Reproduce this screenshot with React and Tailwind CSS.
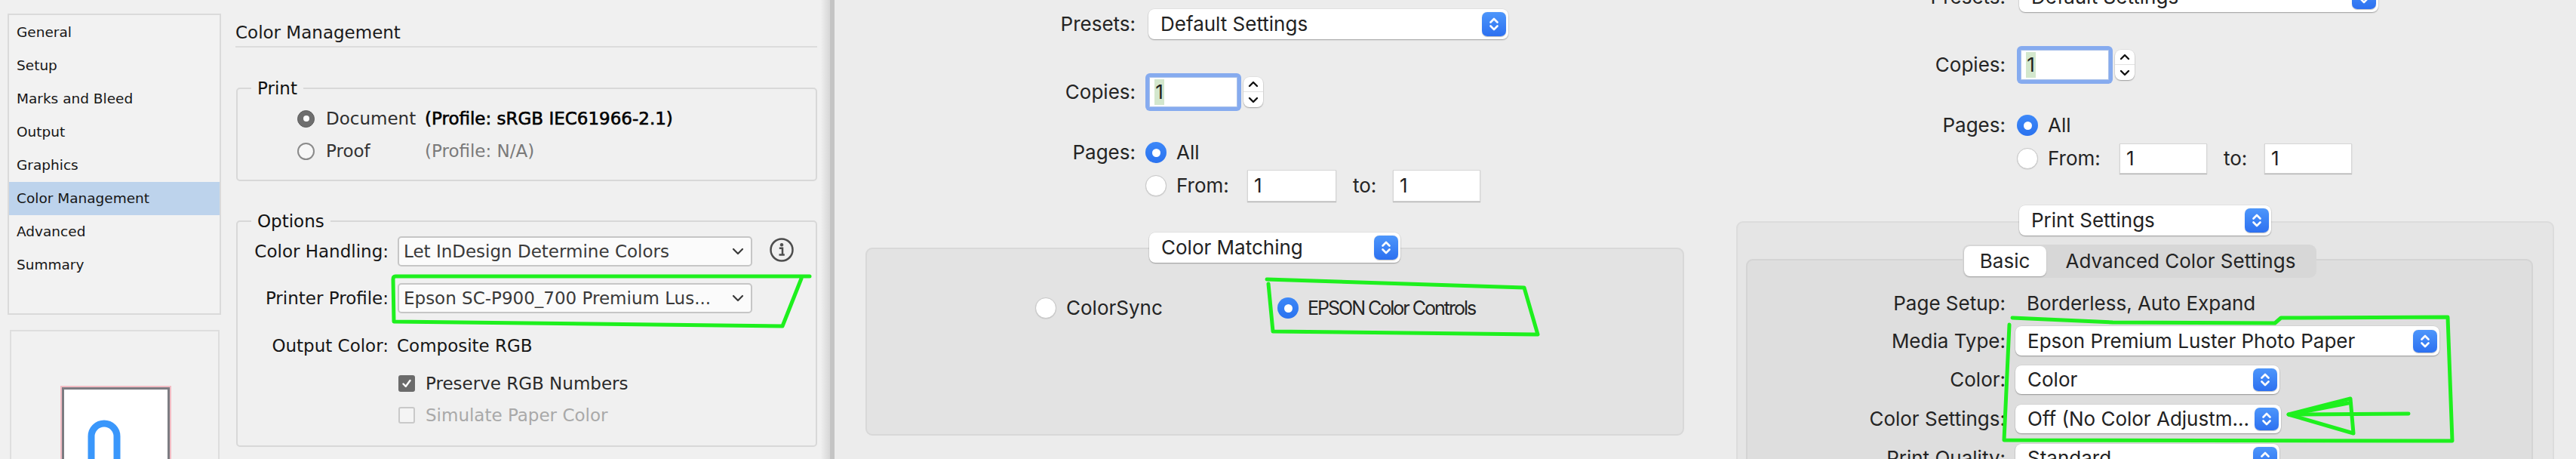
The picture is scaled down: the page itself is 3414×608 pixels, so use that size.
import React from "react";

function Chevrons({ color = "white", w = 16, h = 22, sw = 2.6 }) {
  return (
    <svg width={w} height={h} viewBox="0 0 16 22">
      <path d="M3.5 8.5 L8 4 L12.5 8.5 M3.5 13.5 L8 18 L12.5 13.5" stroke={color} strokeWidth={sw} fill="none" strokeLinecap="round" strokeLinejoin="round" />
    </svg>
  );
}

function BlueStepper({ className = "" }) {
  return (
    <div className={"w-[32px] shrink-0 rounded-[7px] bg-linear-to-b from-[#4d96fb] to-[#2d70f0] flex items-center justify-center shadow-[0_0.5px_1px_rgba(0,0,0,0.25)] " + className}>
      <Chevrons />
    </div>
  );
}

function Popup({ className = "", text, stepH = "h-[32px]" }) {
  return (
    <div className={"flex items-center shrink-0 bg-white rounded-[8px] shadow-[0_1px_1.5px_rgba(0,0,0,0.3),0_0_0_0.5px_rgba(0,0,0,0.08)] pl-[16px] " + className}>
      <span className="leading-none text-[#222] whitespace-nowrap">{text}</span>
      <BlueStepper className={"ml-auto mr-[3px] " + stepH} />
    </div>
  );
}

function SmallStepper({ className = "" }) {
  return (
    <div className={"w-[26px] h-[40px] shrink-0 rounded-[8px] bg-white shadow-[0_1px_1.5px_rgba(0,0,0,0.3),0_0_0_0.5px_rgba(0,0,0,0.08)] flex flex-col items-center " + className}>
      <div className="h-[20px] w-full flex items-center justify-center border-b border-[#e2e2e2]">
        <svg width="14" height="9" viewBox="0 0 14 9"><path d="M2 7 L7 2 L12 7" stroke="#111" strokeWidth="2.4" fill="none" strokeLinecap="round" strokeLinejoin="round" /></svg>
      </div>
      <div className="h-[20px] w-full flex items-center justify-center">
        <svg width="14" height="9" viewBox="0 0 14 9"><path d="M2 2 L7 7 L12 2" stroke="#111" strokeWidth="2.4" fill="none" strokeLinecap="round" strokeLinejoin="round" /></svg>
      </div>
    </div>
  );
}

function CopiesField({ className = "" }) {
  return (
    <div className={"flex items-center shrink-0 " + className}>
      <div className="w-[127px] h-[50px] rounded-[6px] bg-[#86abef] p-[5px]">
        <div className="w-full h-full bg-white border border-[#a9c0ea] flex items-center pl-[6px]">
          <span className="bg-[#d3e7cd] h-[34px] w-[13px] flex items-center justify-center leading-none text-[#1f1f1f]">1</span>
        </div>
      </div>
      <SmallStepper className="ml-[3px]" />
    </div>
  );
}

function BlueRadio({ className = "" }) {
  return (
    <div className={"w-[28px] h-[28px] rounded-full bg-linear-to-b from-[#3d88f8] to-[#2a72ef] flex items-center justify-center shrink-0 " + className}>
      <div className="w-[11px] h-[11px] rounded-full bg-white" />
    </div>
  );
}

function WhiteRadio({ className = "" }) {
  return <div className={"w-[28px] h-[28px] rounded-full bg-white border border-[#c8c8c8] shadow-[0_0.5px_1px_rgba(0,0,0,0.15)] shrink-0 " + className} />;
}

function Field({ className = "" }) {
  return (
    <div className={"shrink-0 bg-white border border-[#d6d6d6] shadow-[0_1px_1px_rgba(0,0,0,0.22)] flex items-center pl-[8px] leading-none text-[#1f1f1f] " + className}>1</div>
  );
}

function InDesignPanel() {
  const items = ["General", "Setup", "Marks and Bleed", "Output", "Graphics", "Color Management", "Advanced", "Summary"];
  return (
    <div className="w-[1088px] h-full shrink-0 bg-[#f0f0f0] flex pl-[10px] pt-[18px] font-['DejaVu_Sans','Liberation_Sans',sans-serif] text-[#161616] overflow-hidden">
      <div className="w-[283px] shrink-0 flex flex-col">
        <div className="h-[399px] shrink-0 border-2 border-[#dadada] bg-[#f2f2f2] pt-[1px]">
          {items.map((it) => (
            <div key={it} className={"h-[44px] flex items-center pl-[10px] text-[18.5px] leading-none " + (it === "Color Management" ? "bg-[#bdd3ec]" : "")}>
              {it}
            </div>
          ))}
        </div>
        <div className="mt-[20px] ml-[3px] w-[278px] h-[200px] shrink-0 border-2 border-[#dedede] bg-[#f1f1f1] pt-[72px] pl-[65px]">
          <div className="w-[147px] h-[130px] border-2 border-[#f2bcc4]">
            <div className="w-full h-full border-[3px] border-[#7c7c82] bg-white pl-[31px] pt-[40px]">
              <svg width="44" height="80" viewBox="0 0 44 80">
                <path d="M5 80 V22 A17 17 0 0 1 39 22 V80" stroke="#3a97fb" strokeWidth="9" fill="none" />
              </svg>
            </div>
          </div>
        </div>
      </div>
      <div className="ml-[19px] w-[771px] shrink-0 flex flex-col text-[23px]">
        <div className="mt-[11px] h-[28px] shrink-0 leading-[28px] text-[23px] text-[#1a1a1a]">Color Management</div>
        <div className="mt-[4px] h-[2px] shrink-0 bg-[#dcdcdc]" />
        <div className="relative mt-[53px] ml-[1px] w-[770px] h-[124px] shrink-0 border-2 border-[#d8d8d8] rounded-[5px]">
          <span className="absolute left-[18px] top-[-15px] px-[8px] bg-[#f0f0f0] leading-[28px] text-[#111]">Print</span>
          <div className="pt-[24px] pl-[79px] flex flex-col gap-[13px]">
            <div className="h-[30px] flex items-center">
              <div className="w-[23px] h-[23px] rounded-full bg-[#6e6e6e] border border-[#5c5c5c] flex items-center justify-center">
                <div className="w-[8px] h-[8px] rounded-full bg-white" />
              </div>
              <span className="ml-[15px] w-[131px] leading-none text-[#2e2e2e]">Document</span>
              <span className="leading-none text-black [-webkit-text-stroke:0.6px_#000]">(Profile: sRGB IEC61966-2.1)</span>
            </div>
            <div className="h-[30px] flex items-center">
              <div className="w-[23px] h-[23px] rounded-full bg-[#f7f7f7] border-2 border-[#8a8a8a]" />
              <span className="ml-[15px] w-[131px] leading-none text-[#333]">Proof</span>
              <span className="leading-none text-[#7a7a7a]">(Profile: N/A)</span>
            </div>
          </div>
        </div>
        <div className="relative mt-[52px] ml-[1px] w-[770px] h-[300px] shrink-0 border-2 border-[#d8d8d8] rounded-[5px]">
          <span className="absolute left-[18px] top-[-15px] px-[8px] bg-[#f0f0f0] leading-[28px] text-[#111]">Options</span>
          <div className="pt-[19px] flex flex-col">
            <div className="h-[40px] flex items-center">
              <div className="w-[200px] text-right leading-none text-[#161616]">Color Handling:</div>
              <div className="ml-[12px] w-[470px] h-[40px] border-2 border-[#c6c6c6] rounded-[5px] bg-[#fbfbfb] pl-[6px] flex items-center">
                <span className="leading-none text-[#3a3a3a] whitespace-nowrap">Let InDesign Determine Colors</span>
                <svg className="ml-auto mr-[9px]" width="16" height="10" viewBox="0 0 16 10"><path d="M2 2 L8 8 L14 2" stroke="#3a3a3a" strokeWidth="2.2" fill="none" strokeLinecap="round" strokeLinejoin="round" /></svg>
              </div>
              <svg className="ml-[23px] -mt-[4px]" width="32" height="32" viewBox="0 0 32 32">
                <circle cx="16" cy="16" r="14.5" stroke="#4d4d4d" strokeWidth="2.5" fill="none" />
                <circle cx="16" cy="9.3" r="2.2" fill="#4d4d4d" />
                <path d="M12.8 13.8 H17 V22.3 M12.5 22.6 H19.8" stroke="#4d4d4d" strokeWidth="2.5" fill="none" />
              </svg>
            </div>
            <div className="mt-[22px] h-[40px] flex items-center">
              <div className="w-[200px] text-right leading-none text-[#161616]">Printer Profile:</div>
              <div className="ml-[12px] w-[470px] h-[40px] border-2 border-[#c6c6c6] rounded-[5px] bg-[#fbfbfb] pl-[6px] flex items-center">
                <span className="leading-none text-[#3a3a3a] whitespace-nowrap">Epson SC-P900_700 Premium Lus...</span>
                <svg className="ml-auto mr-[9px]" width="16" height="10" viewBox="0 0 16 10"><path d="M2 2 L8 8 L14 2" stroke="#3a3a3a" strokeWidth="2.2" fill="none" strokeLinecap="round" strokeLinejoin="round" /></svg>
              </div>
            </div>
            <div className="mt-[23px] h-[40px] flex items-center">
              <div className="w-[200px] text-right leading-none text-[#161616]">Output Color:</div>
              <span className="ml-[11px] leading-none text-[#161616]">Composite RGB</span>
            </div>
            <div className="mt-[15px] h-[30px] flex items-center">
              <div className="ml-[213px] w-[22px] h-[22px] rounded-[3px] bg-[#6b6b6b] flex items-center justify-center">
                <svg width="16" height="16" viewBox="0 0 16 16"><path d="M3.5 8.5 L6.8 11.8 L12.5 4" stroke="white" strokeWidth="2.4" fill="none" strokeLinecap="round" strokeLinejoin="round" /></svg>
              </div>
              <span className="ml-[14px] leading-none text-[#2a2a2a]">Preserve RGB Numbers</span>
            </div>
            <div className="mt-[12px] h-[30px] flex items-center">
              <div className="ml-[213px] w-[22px] h-[22px] rounded-[3px] bg-[#f4f4f4] border-2 border-[#c9c9c9]" />
              <span className="ml-[14px] leading-none text-[#a9a9a9]">Simulate Paper Color</span>
            </div>
          </div>
        </div>
      </div>
    </div>
  );
}

function PrintPanelA() {
  return (
    <div className="w-[1159px] h-full shrink-0 bg-[#ececec] flex flex-col font-['Inter','Liberation_Sans',sans-serif] text-[26px] text-[#242424] overflow-hidden">
      <div className="mt-[12px] flex items-center h-[40px] shrink-0">
        <div className="w-[399px] shrink-0 text-right leading-none">Presets:</div>
        <Popup className="ml-[17px] w-[477px] h-[40px]" text="Default Settings" />
      </div>
      <div className="mt-[45px] flex items-center h-[50px] shrink-0">
        <div className="w-[399px] shrink-0 text-right leading-none">Copies:</div>
        <CopiesField className="ml-[13px]" />
      </div>
      <div className="mt-[40px] flex items-center h-[30px] shrink-0">
        <div className="w-[399px] shrink-0 text-right leading-none">Pages:</div>
        <BlueRadio className="ml-[13px]" />
        <span className="ml-[13px] leading-none">All</span>
      </div>
      <div className="mt-[8px] flex items-center h-[42px] shrink-0">
        <div className="w-[399px] shrink-0" />
        <WhiteRadio className="ml-[13px]" />
        <span className="ml-[13px] w-[94px] shrink-0 leading-none">From:</span>
        <Field className="w-[118px] h-[42px]" />
        <span className="ml-[22px] w-[53px] shrink-0 leading-none">to:</span>
        <Field className="w-[116px] h-[42px]" />
      </div>
      <div className="mt-[41px] ml-[41px] w-[1085px] flex flex-col items-center shrink-0">
        <Popup className="relative z-10 w-[333px] h-[40px]" text="Color Matching" />
        <div className="-mt-[20px] w-full h-[249px] shrink-0 border-2 border-[#d8d8d8] bg-[#e3e3e3] rounded-[9px] pt-[63px] pl-[223px]">
          <div className="h-[30px] flex items-center">
            <div className="w-[321px] shrink-0 flex items-center">
              <WhiteRadio />
              <span className="ml-[13px] leading-none">ColorSync</span>
            </div>
            <BlueRadio />
            <span className="ml-[12px] leading-none whitespace-nowrap text-[25px] tracking-[-2px]">EPSON Color Controls</span>
          </div>
        </div>
      </div>
    </div>
  );
}

function PrintPanelB() {
  return (
    <div className="w-[1149px] h-full shrink-0 bg-[#ececec] flex flex-col font-['Inter','Liberation_Sans',sans-serif] text-[26px] text-[#242424] overflow-hidden">
      <div className="-mt-[24px] flex items-center h-[40px] shrink-0">
        <div className="w-[393px] shrink-0 text-right leading-none">Presets:</div>
        <Popup className="ml-[18px] w-[476px] h-[40px]" text="Default Settings" />
      </div>
      <div className="mt-[45px] flex items-center h-[50px] shrink-0">
        <div className="w-[393px] shrink-0 text-right leading-none">Copies:</div>
        <CopiesField className="ml-[15px]" />
      </div>
      <div className="mt-[40px] flex items-center h-[30px] shrink-0">
        <div className="w-[393px] shrink-0 text-right leading-none">Pages:</div>
        <BlueRadio className="ml-[15px]" />
        <span className="ml-[13px] leading-none">All</span>
      </div>
      <div className="mt-[9px] flex items-center h-[40px] shrink-0">
        <div className="w-[393px] shrink-0" />
        <WhiteRadio className="ml-[15px]" />
        <span className="ml-[13px] w-[95px] shrink-0 leading-none">From:</span>
        <Field className="w-[116px] h-[40px]" />
        <span className="ml-[22px] w-[54px] shrink-0 leading-none">to:</span>
        <Field className="w-[116px] h-[40px]" />
      </div>
      <div className="mt-[42px] ml-[36px] w-[1084px] flex flex-col items-center shrink-0">
        <Popup className="relative z-10 w-[334px] h-[40px]" text="Print Settings" />
        <div className="-mt-[19px] w-full h-[400px] shrink-0 border-2 border-[#dcdcdc] bg-[#e5e5e5] rounded-[9px] pt-[29px] pl-[11px] flex flex-col">
          <div className="relative z-10 w-[1043px] h-[44px] shrink-0 flex justify-center">
            <div className="h-[44px] rounded-[9px] bg-[#d7d7d7] p-[2px] flex items-center">
              <div className="w-[109px] h-[40px] rounded-[8px] bg-white shadow-[0_1px_1.5px_rgba(0,0,0,0.25)] flex items-center justify-center leading-none">Basic</div>
              <span className="px-[26px] leading-none whitespace-nowrap">Advanced Color Settings</span>
            </div>
          </div>
          <div className="-mt-[25px] w-[1043px] h-[400px] shrink-0 border-2 border-[#d4d4d4] bg-[#dedede] rounded-[9px] pt-[42px] flex flex-col">
            <div className="h-[30px] flex items-center shrink-0">
              <div className="w-[342px] shrink-0 text-right leading-none">Page Setup:</div>
              <span className="ml-[28px] leading-none">Borderless, Auto Expand</span>
            </div>
            <div className="mt-[15px] h-[39px] flex items-center shrink-0">
              <div className="w-[342px] shrink-0 text-right leading-none">Media Type:</div>
              <Popup className="ml-[13px] w-[562px] h-[39px]" stepH="h-[30px]" text="Epson Premium Luster Photo Paper" />
            </div>
            <div className="mt-[13px] h-[38px] flex items-center shrink-0">
              <div className="w-[342px] shrink-0 text-right leading-none">Color:</div>
              <Popup className="ml-[13px] w-[350px] h-[38px]" stepH="h-[30px]" text="Color" />
            </div>
            <div className="mt-[14px] h-[38px] flex items-center shrink-0">
              <div className="w-[342px] shrink-0 text-right leading-none">Color Settings:</div>
              <Popup className="ml-[13px] w-[352px] h-[38px]" stepH="h-[30px]" text="Off (No Color Adjustm..." />
            </div>
            <div className="mt-[14px] h-[38px] flex items-center shrink-0">
              <div className="w-[342px] shrink-0 text-right leading-none">Print Quality:</div>
              <Popup className="ml-[13px] w-[350px] h-[38px]" stepH="h-[30px]" text="Standard" />
            </div>
          </div>
        </div>
      </div>
    </div>
  );
}

function Annotations() {
  const g = "#1ef01e";
  return (
    <svg className="absolute left-0 top-0 pointer-events-none" width="3414" height="608" viewBox="0 0 3414 608">
      <g stroke={g} strokeWidth="5" fill="none" strokeLinejoin="round" strokeLinecap="round">
        <path d="M1073 366 L524 366 Q521 366 521 370 L522 426 L1037 432 L1062 369" />
        <path d="M1679 370 L2020 381 L2038 443 L1687 439 L1681 376" />
        <path d="M2667 421 L2800 427 L3015 428 L3023 421 L3244 420 L3250 584 L2656 583 L2663 430" />
        <path d="M3192 548 L3033 549" />
        <path d="M3033 549 L3115 528 L3119 574 Z" />
        <path d="M3040 548 L3112 534" />
      </g>
    </svg>
  );
}

export default function App() {
  return (
    <div className="relative w-[3414px] h-[608px] overflow-hidden flex bg-[#ececec]">
      <InDesignPanel />
      <div className="w-[12px] h-full shrink-0 bg-linear-to-r from-[#efefef] to-[#d6d6d6]" />
      <div className="w-[6px] h-full shrink-0 bg-[#c4c4c4]" />
      <PrintPanelA />
      <PrintPanelB />
      <Annotations />
    </div>
  );
}
